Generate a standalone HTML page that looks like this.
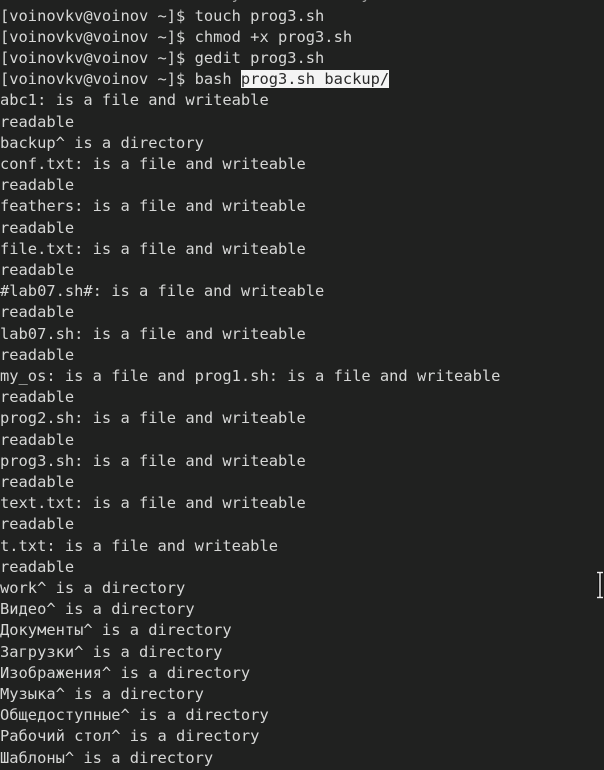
<!DOCTYPE html>
<html><head><meta charset="utf-8"><style>
html,body{margin:0;padding:0;background:#202120;width:604px;height:770px;overflow:hidden}
pre{margin:0;position:absolute;left:0;top:5.5px;font-family:"DejaVu Sans Mono","Liberation Mono",monospace;font-size:15.4px;line-height:21.2px;color:#d6d7d6;white-space:pre}
.hl{background:#f4f4f4;color:#2a2a2a}
.cur{position:absolute;left:595px;top:571px}
</style></head><body>
<pre style="top:-16px;color:#9a9a9a">                         y             y                </pre>
<pre>[voinovkv@voinov ~]$ touch prog3.sh
[voinovkv@voinov ~]$ chmod +x prog3.sh
[voinovkv@voinov ~]$ gedit prog3.sh
[voinovkv@voinov ~]$ bash <span class="hl">prog3.sh backup/</span>
abc1: is a file and writeable
readable
backup^ is a directory
conf.txt: is a file and writeable
readable
feathers: is a file and writeable
readable
file.txt: is a file and writeable
readable
#lab07.sh#: is a file and writeable
readable
lab07.sh: is a file and writeable
readable
my_os: is a file and prog1.sh: is a file and writeable
readable
prog2.sh: is a file and writeable
readable
prog3.sh: is a file and writeable
readable
text.txt: is a file and writeable
readable
t.txt: is a file and writeable
readable
work^ is a directory
Видео^ is a directory
Документы^ is a directory
Загрузки^ is a directory
Изображения^ is a directory
Музыка^ is a directory
Общедоступные^ is a directory
Рабочий стол^ is a directory
Шаблоны^ is a directory</pre>
<svg class="cur" width="10" height="28" viewBox="0 0 10 28"><path d="M2 1.5h6M5 1.5v25M2 26.5h6" stroke="#111" stroke-width="3.5" fill="none"/><path d="M2 1.5h6M5 1.5v25M2 26.5h6" stroke="#eee" stroke-width="1.5" fill="none"/></svg>
</body></html>
